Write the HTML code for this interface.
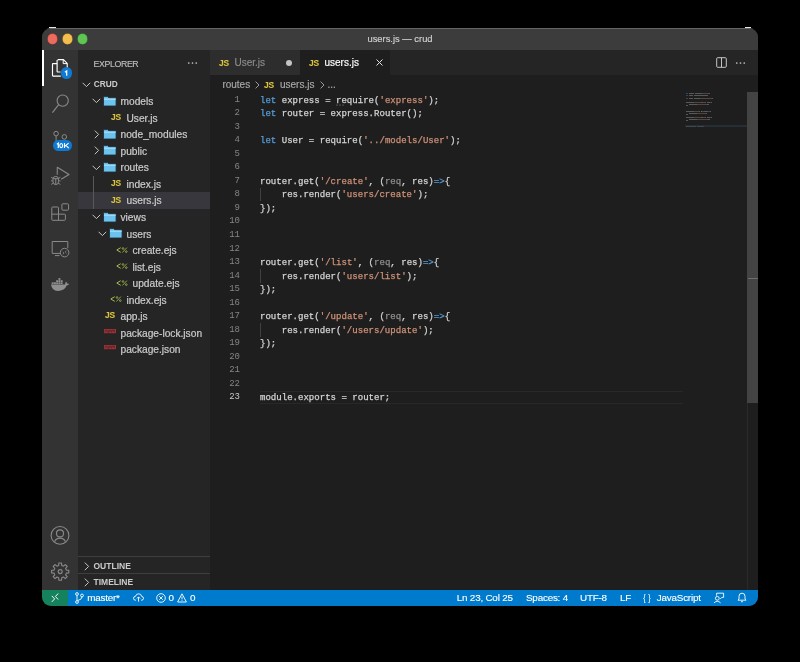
<!DOCTYPE html>
<html><head><meta charset="utf-8">
<style>
*{margin:0;padding:0;box-sizing:border-box}
html,body{width:800px;height:662px;background:#000;overflow:hidden}
body{font-family:"Liberation Sans",sans-serif;position:relative;-webkit-font-smoothing:antialiased}
#root{position:absolute;left:0;top:0;width:800px;height:662px;will-change:transform}
.abs{position:absolute}
svg.abs{overflow:visible}
.t{position:absolute;white-space:pre;color:#cccccc;font-size:10px;line-height:12px}
.side{font-size:10.2px;color:#cccccc;-webkit-text-stroke:0.2px #cccccc}
.jsic{font-size:9.8px;font-weight:700;color:#dcc53c;letter-spacing:-0.3px;-webkit-text-stroke:0.1px #dcc53c;transform:scaleX(0.86);transform-origin:0 0}
.ejsic{font-size:8.6px;font-weight:400;color:#9ab64a;letter-spacing:-0.3px;-webkit-text-stroke:0.05px #9ab64a}
.code{position:absolute;left:260px;-webkit-text-stroke:0.25px currentColor;white-space:pre;font-family:"Liberation Mono",monospace;font-size:9.05px;line-height:13.545px;color:#d4d4d4}
.ln{position:absolute;left:200px;width:40px;font-family:"Liberation Mono",monospace;font-size:9px;line-height:13.545px;color:#858585;text-align:right}
.ln.cur{color:#c6c6c6}
.k{color:#569cd6;-webkit-text-stroke:0.25px #569cd6}.s{color:#ce9178;-webkit-text-stroke:0.25px #ce9178}.dim{color:#8f8f8f;-webkit-text-stroke:0.25px #8f8f8f}
.sb{position:absolute;top:591.6px;white-space:pre;color:#ffffff;font-size:9.9px;letter-spacing:-0.22px;line-height:12px;-webkit-text-stroke:0.12px #fff}
</style></head><body><div id="root">
<!-- window -->
<div class="abs" style="left:42px;top:27.8px;width:716px;height:578.5px;border-radius:9px;background:#1e1e1e;overflow:hidden">
  <div class="abs" style="left:0;top:0;width:716px;height:22.2px;background:#3c3c3c;border-top:1px solid #646464"></div>
</div>
<div class="abs" style="left:49px;top:27px;width:7px;height:1px;background:#e8e8e8"></div>
<div class="abs" style="left:745px;top:27px;width:6px;height:1px;background:#e8e8e8"></div>
<!-- traffic lights -->
<div class="abs" style="left:47.8px;top:34px;width:9.6px;height:9.6px;border-radius:50%;background:#ed6a5e;box-shadow:0 0 0 0.5px #c4463c"></div>
<div class="abs" style="left:62.8px;top:34px;width:9.6px;height:9.6px;border-radius:50%;background:#f4be4f;box-shadow:0 0 0 0.5px #d09a30"></div>
<div class="abs" style="left:77.8px;top:34px;width:9.6px;height:9.6px;border-radius:50%;background:#61c554;box-shadow:0 0 0 0.5px #3fa036"></div>
<div class="t" style="left:300px;width:200px;text-align:center;top:33px;font-size:9.4px;color:#d0d0d0;-webkit-text-stroke:0.15px #d0d0d0">users.js — crud</div>

<!-- activity bar -->
<div class="abs" style="left:42px;top:50px;width:36px;height:540px;background:#333333"></div>
<div class="abs" style="left:42px;top:50px;width:1.6px;height:36px;background:#ffffff"></div>
<!-- explorer icon -->
<svg class="abs" style="left:42px;top:50px" width="36" height="36" viewBox="0 0 36 36">
  <path d="M15.1 13.6 L11 13.6 Q10.5 13.6 10.5 14.1 L10.5 25.6 Q10.5 26.1 11 26.1 L18.8 26.1" fill="none" stroke="#ffffff" stroke-width="1.15"/>
  <path d="M15.6 9.6 L21.4 9.6 L25.2 13.4 L25.2 21.5 M15.1 10.1 L15.1 21.6 Q15.1 22 15.5 22 L18.5 22" fill="none" stroke="#ffffff" stroke-width="1.15"/>
  <path d="M21.2 9.8 L21.2 13.6 L25 13.6" fill="none" stroke="#ffffff" stroke-width="1"/>
</svg>
<div class="abs" style="left:60.5px;top:67.4px;width:11.8px;height:11.8px;border-radius:50%;background:#0e7ad3"></div>
<svg class="abs" style="left:60px;top:67px" width="13" height="13" viewBox="0 0 13 13"><path d="M4.9 5.2 L6.7 4 L6.7 8.7" fill="none" stroke="#fff" stroke-width="1.25"/></svg>
<!-- search -->
<svg class="abs" style="left:42px;top:86px" width="36" height="36" viewBox="0 0 36 36">
  <circle cx="20.7" cy="14.6" r="5.6" fill="none" stroke="#8a8a8a" stroke-width="1.1"/>
  <path d="M16.7 18.6 L10.4 26.6" fill="none" stroke="#8a8a8a" stroke-width="1.1"/>
</svg>
<!-- source control -->
<svg class="abs" style="left:42px;top:122px" width="36" height="36" viewBox="0 0 36 36">
  <circle cx="14.1" cy="11.6" r="2.3" fill="none" stroke="#8a8a8a" stroke-width="1"/>
  <circle cx="22.3" cy="14.9" r="2.3" fill="none" stroke="#8a8a8a" stroke-width="1"/>
  <path d="M14.1 13.9 L14.1 20" fill="none" stroke="#8a8a8a" stroke-width="1"/>
</svg>
<div class="abs" style="left:53.2px;top:139.6px;width:19.2px;height:11.8px;border-radius:5.9px;background:#0e7ad3"></div>
<svg class="abs" style="left:53px;top:139px" width="20" height="13" viewBox="0 0 20 13"><path d="M3.9 5.3 L5.3 4.2 L5.3 9.1" fill="none" stroke="#fff" stroke-width="1.2"/><ellipse cx="8.2" cy="6.6" rx="1.45" ry="2.05" fill="none" stroke="#fff" stroke-width="1.1"/><path d="M11.5 4.1 L11.5 9.1 M15.6 4.1 L11.7 7.4 M12.9 6.3 L15.8 9.1" fill="none" stroke="#fff" stroke-width="1.15"/></svg>
<!-- run & debug -->
<svg class="abs" style="left:42px;top:158px" width="36" height="36" viewBox="0 0 36 36">
  <path d="M15.25 16.7 L15.25 9.3 L27 16.5 L19.2 21.3" fill="none" stroke="#8a8a8a" stroke-width="1.05" stroke-linejoin="round"/>
  <path d="M11 21.2 Q11 18.4 13.75 18.4 Q16.5 18.4 16.5 21.2 L16.5 23.6 Q16.5 26.6 13.75 26.6 Q11 26.6 11 23.6 Z M11.2 20.7 L16.3 20.7 M13.75 20.7 L13.75 26.4" fill="none" stroke="#8a8a8a" stroke-width="1"/>
  <path d="M9.1 19.3 L11.2 20.5 M18.4 19.3 L16.3 20.5 M9 22.9 L11 22.9 M18.5 22.9 L16.5 22.9 M9.2 26.4 L11.3 25.2 M18.3 26.4 L16.2 25.2" fill="none" stroke="#8a8a8a" stroke-width="0.95"/>
</svg>
<!-- extensions -->
<svg class="abs" style="left:42px;top:194px" width="36" height="36" viewBox="0 0 36 36">
  <path d="M9.8 13.8 Q9.8 13 10.6 13 L15.8 13 Q16.5 13 16.5 13.8 L16.5 20.15 L22.6 20.15 Q23.4 20.15 23.4 20.9 L23.4 25.5 Q23.4 26.3 22.6 26.3 L10.6 26.3 Q9.8 26.3 9.8 25.5 Z M9.8 20.15 L16.5 20.15 L16.5 26.3" fill="none" stroke="#8a8a8a" stroke-width="1"/>
  <rect x="19.9" y="9.8" width="6.65" height="6.4" rx="1" fill="none" stroke="#8a8a8a" stroke-width="1"/>
</svg>
<!-- remote explorer -->
<svg class="abs" style="left:42px;top:230px" width="36" height="36" viewBox="0 0 36 36">
  <path d="M18.5 23.4 L10.2 23.4 L10.2 11.5 L25.8 11.5 L25.8 18.2 M13 25.6 L17.5 25.6" fill="none" stroke="#8a8a8a" stroke-width="1"/>
  <circle cx="22.6" cy="22.6" r="4.3" fill="none" stroke="#8a8a8a" stroke-width="1"/>
  <path d="M20.7 21.9 L22 23 L20.9 24.4 M24.4 20.8 L23.2 22 L24.4 23.2" fill="none" stroke="#8a8a8a" stroke-width="0.8"/>
</svg>
<!-- docker -->
<svg class="abs" style="left:42px;top:266px" width="36" height="36" viewBox="0 0 36 36">
  <g fill="#8f8f8f">
  <path d="M9 18.4 L23 18.4 Q23.2 16.8 24.1 15.6 Q25 16.6 25 17.6 Q26.2 17.3 27.2 18 Q26.4 19.4 24.7 19.5 Q22.6 24.9 15.8 24.9 Q10 24.9 9 18.4 Z"/>
  <rect x="9.70" y="16.3" width="1.95" height="1.8"/><rect x="11.95" y="16.3" width="1.95" height="1.8"/><rect x="14.20" y="16.3" width="1.95" height="1.8"/><rect x="16.45" y="16.3" width="1.95" height="1.8"/><rect x="18.70" y="16.3" width="1.95" height="1.8"/><rect x="14.20" y="14.2" width="1.95" height="1.8"/><rect x="16.45" y="14.2" width="1.95" height="1.8"/><rect x="18.70" y="14.2" width="1.95" height="1.8"/><rect x="16.45" y="12.1" width="1.95" height="1.8"/>
  </g>
</svg>
<!-- account -->
<svg class="abs" style="left:42px;top:517px" width="36" height="36" viewBox="0 0 36 36">
  <circle cx="18" cy="18.4" r="8.9" fill="none" stroke="#8a8a8a" stroke-width="1.1"/>
  <circle cx="18" cy="16.4" r="3.5" fill="none" stroke="#8a8a8a" stroke-width="1.1"/>
  <path d="M12.6 24.5 Q14.2 21.1 18 21.1 Q21.8 21.1 23.4 24.5" fill="none" stroke="#8a8a8a" stroke-width="1.1"/>
</svg>
<!-- settings gear -->
<svg class="abs" style="left:42px;top:553px" width="36" height="36" viewBox="0 0 36 36">
  <path d="M16.68 12.49 L16.84 10.01 L19.56 10.01 L19.72 12.49 L21.44 13.20 L23.31 11.56 L25.24 13.49 L23.60 15.36 L24.31 17.08 L26.79 17.24 L26.79 19.96 L24.31 20.12 L23.60 21.84 L25.24 23.71 L23.31 25.64 L21.44 24.00 L19.72 24.71 L19.56 27.19 L16.84 27.19 L16.68 24.71 L14.96 24.00 L13.09 25.64 L11.16 23.71 L12.80 21.84 L12.09 20.12 L9.61 19.96 L9.61 17.24 L12.09 17.08 L12.80 15.36 L11.16 13.49 L13.09 11.56 L14.96 13.20 Z" fill="none" stroke="#8a8a8a" stroke-width="1.1" stroke-linejoin="round"/>
  <circle cx="18.2" cy="18.6" r="2" fill="none" stroke="#8a8a8a" stroke-width="1.1"/>
</svg>

<!-- sidebar -->
<div class="abs" style="left:78px;top:50px;width:132px;height:540px;background:#252526"></div>
<div class="t" style="left:93.6px;top:57.6px;font-size:8.8px;letter-spacing:-0.4px;color:#bbbbbb;-webkit-text-stroke:0.15px #bbbbbb">EXPLORER</div>
<svg class="abs" style="left:186px;top:61px" width="13" height="4" viewBox="0 0 13 4"><circle cx="2.75" cy="2" r="0.85" fill="#c5c5c5"/><circle cx="6.5" cy="2" r="0.85" fill="#c5c5c5"/><circle cx="10.25" cy="2" r="0.85" fill="#c5c5c5"/></svg>
<svg class="abs" style="left:81.5px;top:82px" width="9" height="6" viewBox="0 0 9 6"><path d="M0.6 0.8 L4.4 4.6 L8.2 0.8" fill="none" stroke="#c5c5c5" stroke-width="1"/></svg>
<div class="t" style="left:93.8px;top:77.9px;font-size:8.3px;font-weight:700;color:#cccccc">CRUD</div>
<svg class="abs" style="left:91.5px;top:98.465px" width="9" height="6" viewBox="0 0 9 6"><path d="M0.6 0.8 L4.4 4.6 L8.2 0.8" fill="none" stroke="#c5c5c5" stroke-width="1"/></svg>
<svg class="abs" style="left:102.9px;top:95.865px" width="13.6" height="10.6" viewBox="0 0 13 10"><path d="M0.5 1.2 Q0.5 0.5 1.2 0.5 L4.3 0.5 L5.5 1.6 L11.8 1.6 Q12.5 1.6 12.5 2.3 L12.5 8.8 Q12.5 9.5 11.8 9.5 L1.2 9.5 Q0.5 9.5 0.5 8.8 Z" fill="#6cc3ee" stroke="#1c2c38" stroke-width="0.8"/><path d="M0.9 3 L12.1 3" stroke="#a6dcf6" stroke-width="1.2"/></svg>
<div class="t side" style="left:120.50px;top:96.27px">models</div>
<div class="t jsic" style="left:111.30px;top:110.89px">JS</div>
<div class="t side" style="left:126.50px;top:112.80px">User.js</div>
<svg class="abs" style="left:93.5px;top:129.825px" width="6" height="9" viewBox="0 0 6 9"><path d="M0.8 0.6 L4.6 4.4 L0.8 8.2" fill="none" stroke="#c5c5c5" stroke-width="1"/></svg>
<svg class="abs" style="left:102.9px;top:128.92499999999998px" width="13.6" height="10.6" viewBox="0 0 13 10"><path d="M0.5 1.2 Q0.5 0.5 1.2 0.5 L4.3 0.5 L5.5 1.6 L11.8 1.6 Q12.5 1.6 12.5 2.3 L12.5 8.8 Q12.5 9.5 11.8 9.5 L1.2 9.5 Q0.5 9.5 0.5 8.8 Z" fill="#6cc3ee" stroke="#1c2c38" stroke-width="0.8"/><path d="M0.9 3 L12.1 3" stroke="#a6dcf6" stroke-width="1.2"/></svg>
<div class="t side" style="left:120.50px;top:129.32px">node_modules</div>
<svg class="abs" style="left:93.5px;top:146.35500000000002px" width="6" height="9" viewBox="0 0 6 9"><path d="M0.8 0.6 L4.6 4.4 L0.8 8.2" fill="none" stroke="#c5c5c5" stroke-width="1"/></svg>
<svg class="abs" style="left:102.9px;top:145.455px" width="13.6" height="10.6" viewBox="0 0 13 10"><path d="M0.5 1.2 Q0.5 0.5 1.2 0.5 L4.3 0.5 L5.5 1.6 L11.8 1.6 Q12.5 1.6 12.5 2.3 L12.5 8.8 Q12.5 9.5 11.8 9.5 L1.2 9.5 Q0.5 9.5 0.5 8.8 Z" fill="#6cc3ee" stroke="#1c2c38" stroke-width="0.8"/><path d="M0.9 3 L12.1 3" stroke="#a6dcf6" stroke-width="1.2"/></svg>
<div class="t side" style="left:120.50px;top:145.86px">public</div>
<svg class="abs" style="left:91.5px;top:164.58499999999998px" width="9" height="6" viewBox="0 0 9 6"><path d="M0.6 0.8 L4.4 4.6 L8.2 0.8" fill="none" stroke="#c5c5c5" stroke-width="1"/></svg>
<svg class="abs" style="left:102.9px;top:161.98499999999999px" width="13.6" height="10.6" viewBox="0 0 13 10"><path d="M0.5 1.2 Q0.5 0.5 1.2 0.5 L4.3 0.5 L5.5 1.6 L11.8 1.6 Q12.5 1.6 12.5 2.3 L12.5 8.8 Q12.5 9.5 11.8 9.5 L1.2 9.5 Q0.5 9.5 0.5 8.8 Z" fill="#6cc3ee" stroke="#1c2c38" stroke-width="0.8"/><path d="M0.9 3 L12.1 3" stroke="#a6dcf6" stroke-width="1.2"/></svg>
<div class="t side" style="left:120.50px;top:162.38px">routes</div>
<div class="t jsic" style="left:111.30px;top:177.02px">JS</div>
<div class="t side" style="left:126.50px;top:178.92px">index.js</div>
<div class="abs" style="left:78px;top:192.18px;width:132px;height:16.53px;background:#37373d"></div>
<div class="t jsic" style="left:111.30px;top:193.54px">JS</div>
<div class="t side" style="left:126.50px;top:195.44px">users.js</div>
<svg class="abs" style="left:91.5px;top:214.175px" width="9" height="6" viewBox="0 0 9 6"><path d="M0.6 0.8 L4.4 4.6 L8.2 0.8" fill="none" stroke="#c5c5c5" stroke-width="1"/></svg>
<svg class="abs" style="left:102.9px;top:211.57500000000002px" width="13.6" height="10.6" viewBox="0 0 13 10"><path d="M0.5 1.2 Q0.5 0.5 1.2 0.5 L4.3 0.5 L5.5 1.6 L11.8 1.6 Q12.5 1.6 12.5 2.3 L12.5 8.8 Q12.5 9.5 11.8 9.5 L1.2 9.5 Q0.5 9.5 0.5 8.8 Z" fill="#6cc3ee" stroke="#1c2c38" stroke-width="0.8"/><path d="M0.9 3 L12.1 3" stroke="#a6dcf6" stroke-width="1.2"/></svg>
<div class="t side" style="left:120.50px;top:211.98px">views</div>
<svg class="abs" style="left:97.5px;top:230.70499999999998px" width="9" height="6" viewBox="0 0 9 6"><path d="M0.6 0.8 L4.4 4.6 L8.2 0.8" fill="none" stroke="#c5c5c5" stroke-width="1"/></svg>
<svg class="abs" style="left:108.9px;top:228.105px" width="13.6" height="10.6" viewBox="0 0 13 10"><path d="M0.5 1.2 Q0.5 0.5 1.2 0.5 L4.3 0.5 L5.5 1.6 L11.8 1.6 Q12.5 1.6 12.5 2.3 L12.5 8.8 Q12.5 9.5 11.8 9.5 L1.2 9.5 Q0.5 9.5 0.5 8.8 Z" fill="#6cc3ee" stroke="#1c2c38" stroke-width="0.8"/><path d="M0.9 3 L12.1 3" stroke="#a6dcf6" stroke-width="1.2"/></svg>
<div class="t side" style="left:126.50px;top:228.50px">users</div>
<svg class="abs" style="left:115.70px;top:246.84px" width="12" height="7" viewBox="0 0 12 7"><path d="M4.7 0.7 L0.8 3 L4.7 5.3" fill="none" stroke="#a3bf4e" stroke-width="1"/><circle cx="7" cy="1.5" r="0.85" fill="none" stroke="#a3bf4e" stroke-width="0.75"/><circle cx="10.3" cy="4.6" r="0.85" fill="none" stroke="#a3bf4e" stroke-width="0.75"/><path d="M10.9 0.6 L6.4 5.5" stroke="#a3bf4e" stroke-width="0.8"/></svg>
<div class="t side" style="left:132.50px;top:245.04px">create.ejs</div>
<svg class="abs" style="left:115.70px;top:263.37px" width="12" height="7" viewBox="0 0 12 7"><path d="M4.7 0.7 L0.8 3 L4.7 5.3" fill="none" stroke="#a3bf4e" stroke-width="1"/><circle cx="7" cy="1.5" r="0.85" fill="none" stroke="#a3bf4e" stroke-width="0.75"/><circle cx="10.3" cy="4.6" r="0.85" fill="none" stroke="#a3bf4e" stroke-width="0.75"/><path d="M10.9 0.6 L6.4 5.5" stroke="#a3bf4e" stroke-width="0.8"/></svg>
<div class="t side" style="left:132.50px;top:261.56px">list.ejs</div>
<svg class="abs" style="left:115.70px;top:279.90px" width="12" height="7" viewBox="0 0 12 7"><path d="M4.7 0.7 L0.8 3 L4.7 5.3" fill="none" stroke="#a3bf4e" stroke-width="1"/><circle cx="7" cy="1.5" r="0.85" fill="none" stroke="#a3bf4e" stroke-width="0.75"/><circle cx="10.3" cy="4.6" r="0.85" fill="none" stroke="#a3bf4e" stroke-width="0.75"/><path d="M10.9 0.6 L6.4 5.5" stroke="#a3bf4e" stroke-width="0.8"/></svg>
<div class="t side" style="left:132.50px;top:278.10px">update.ejs</div>
<svg class="abs" style="left:109.70px;top:296.43px" width="12" height="7" viewBox="0 0 12 7"><path d="M4.7 0.7 L0.8 3 L4.7 5.3" fill="none" stroke="#a3bf4e" stroke-width="1"/><circle cx="7" cy="1.5" r="0.85" fill="none" stroke="#a3bf4e" stroke-width="0.75"/><circle cx="10.3" cy="4.6" r="0.85" fill="none" stroke="#a3bf4e" stroke-width="0.75"/><path d="M10.9 0.6 L6.4 5.5" stroke="#a3bf4e" stroke-width="0.8"/></svg>
<div class="t side" style="left:126.50px;top:294.62px">index.ejs</div>
<div class="t jsic" style="left:105.30px;top:309.25px">JS</div>
<div class="t side" style="left:120.50px;top:311.15px">app.js</div>
<svg class="abs" style="left:103.90px;top:328.88px" width="12" height="5" viewBox="0 0 12 5"><rect x="0" y="0" width="12" height="4.2" fill="#9e3538"/><path d="M1.2 3.4 L1.2 1.1 L3 1.1 L3 3.4 M4.4 4.4 L4.4 1.1 L6.4 1.1 L6.4 2.7 L5.2 2.7 M7.6 3.4 L7.6 1.1 L10.6 1.1 L10.6 3.4 M9.1 1.1 L9.1 3" fill="none" stroke="#5a1e22" stroke-width="0.7"/></svg>
<div class="t side" style="left:120.50px;top:327.69px">package-lock.json</div>
<svg class="abs" style="left:103.90px;top:345.42px" width="12" height="5" viewBox="0 0 12 5"><rect x="0" y="0" width="12" height="4.2" fill="#9e3538"/><path d="M1.2 3.4 L1.2 1.1 L3 1.1 L3 3.4 M4.4 4.4 L4.4 1.1 L6.4 1.1 L6.4 2.7 L5.2 2.7 M7.6 3.4 L7.6 1.1 L10.6 1.1 L10.6 3.4 M9.1 1.1 L9.1 3" fill="none" stroke="#5a1e22" stroke-width="0.7"/></svg>
<div class="t side" style="left:120.50px;top:344.22px">package.json</div>
<div class="abs" style="left:93px;top:175.65px;width:1px;height:33.06px;background:#585858"></div>
<!-- outline / timeline -->
<div class="abs" style="left:78px;top:556.3px;width:132px;height:1px;background:#3e3e3e"></div>
<div class="abs" style="left:78px;top:573.2px;width:132px;height:1px;background:#3e3e3e"></div>
<svg class="abs" style="left:84px;top:561.5px" width="6" height="9" viewBox="0 0 6 9"><path d="M0.8 0.6 L4.6 4.4 L0.8 8.2" fill="none" stroke="#c5c5c5" stroke-width="1"/></svg>
<div class="t" style="left:93.5px;top:559.6px;font-size:8.5px;font-weight:700;color:#cccccc">OUTLINE</div>
<svg class="abs" style="left:84px;top:578px" width="6" height="9" viewBox="0 0 6 9"><path d="M0.8 0.6 L4.6 4.4 L0.8 8.2" fill="none" stroke="#c5c5c5" stroke-width="1"/></svg>
<div class="t" style="left:93.5px;top:576px;font-size:8.5px;font-weight:700;color:#cccccc">TIMELINE</div>

<!-- tabs -->
<div class="abs" style="left:210px;top:50px;width:548px;height:25px;background:#252526"></div>
<div class="abs" style="left:210px;top:50px;width:90px;height:25px;background:#2d2d2d"></div>
<div class="abs" style="left:300px;top:50px;width:90px;height:25px;background:#1e1e1e"></div>
<div class="t jsic" style="left:218.6px;top:57px">JS</div>
<div class="t" style="left:234.5px;top:57.3px;color:#8c8c8c;-webkit-text-stroke:0.15px #8c8c8c">User.js</div>
<div class="abs" style="left:286.3px;top:59.7px;width:6px;height:6px;border-radius:50%;background:#c4c4c4"></div>
<div class="t jsic" style="left:309.4px;top:57px">JS</div>
<div class="t" style="left:324.5px;top:57.3px;color:#ffffff;-webkit-text-stroke:0.15px #fff">users.js</div>
<svg class="abs" style="left:376px;top:59px" width="7" height="7" viewBox="0 0 7 7"><path d="M0.5 0.5 L6.5 6.5 M6.5 0.5 L0.5 6.5" stroke="#e0e0e0" stroke-width="1"/></svg>
<!-- split / more -->
<svg class="abs" style="left:715.8px;top:57.4px" width="11" height="11" viewBox="0 0 11 11"><rect x="0.7" y="0.7" width="9.6" height="9.6" rx="1" fill="none" stroke="#c5c5c5" stroke-width="1"/><path d="M5.5 0.7 L5.5 10.3" stroke="#c5c5c5" stroke-width="1"/></svg>
<svg class="abs" style="left:734px;top:61px" width="13" height="4" viewBox="0 0 13 4"><circle cx="2.75" cy="2" r="0.85" fill="#c5c5c5"/><circle cx="6.5" cy="2" r="0.85" fill="#c5c5c5"/><circle cx="10.25" cy="2" r="0.85" fill="#c5c5c5"/></svg>

<!-- breadcrumbs -->
<div class="t" style="left:222.4px;top:79.4px;color:#a9a9a9;-webkit-text-stroke:0.15px #a9a9a9">routes</div>
<svg class="abs" style="left:254.6px;top:80.5px" width="5" height="8" viewBox="0 0 5 8"><path d="M0.6 0.6 L4 4 L0.6 7.4" fill="none" stroke="#a9a9a9" stroke-width="0.9"/></svg>
<div class="t jsic" style="left:264.2px;top:79.4px">JS</div>
<div class="t" style="left:280px;top:79.4px;color:#a9a9a9;-webkit-text-stroke:0.15px #a9a9a9">users.js</div>
<svg class="abs" style="left:319.6px;top:80.5px" width="5" height="8" viewBox="0 0 5 8"><path d="M0.6 0.6 L4 4 L0.6 7.4" fill="none" stroke="#a9a9a9" stroke-width="0.9"/></svg>
<div class="t" style="left:327.5px;top:79.4px;color:#a9a9a9;-webkit-text-stroke:0.15px #a9a9a9">...</div>

<!-- code -->
<div class="ln" style="top:93.50px">1</div>
<div class="code" style="top:93.50px"><span class="k">let</span> express = require(<span class="s">&#x27;express&#x27;</span>);</div>
<div class="ln" style="top:107.05px">2</div>
<div class="code" style="top:107.05px"><span class="k">let</span> router = express.Router();</div>
<div class="ln" style="top:120.59px">3</div>
<div class="ln" style="top:134.13px">4</div>
<div class="code" style="top:134.13px"><span class="k">let</span> User = require(<span class="s">&#x27;../models/User&#x27;</span>);</div>
<div class="ln" style="top:147.68px">5</div>
<div class="ln" style="top:161.22px">6</div>
<div class="ln" style="top:174.77px">7</div>
<div class="code" style="top:174.77px">router.get(<span class="s">&#x27;/create&#x27;</span>, (<span class="dim">req</span>, res)<span class="k">=&gt;</span>{</div>
<div class="ln" style="top:188.31px">8</div>
<div class="code" style="top:188.31px">    res.render(<span class="s">&#x27;users/create&#x27;</span>);</div>
<div class="ln" style="top:201.86px">9</div>
<div class="code" style="top:201.86px">});</div>
<div class="ln" style="top:215.41px">10</div>
<div class="ln" style="top:228.95px">11</div>
<div class="ln" style="top:242.50px">12</div>
<div class="ln" style="top:256.04px">13</div>
<div class="code" style="top:256.04px">router.get(<span class="s">&#x27;/list&#x27;</span>, (<span class="dim">req</span>, res)<span class="k">=&gt;</span>{</div>
<div class="ln" style="top:269.59px">14</div>
<div class="code" style="top:269.59px">    res.render(<span class="s">&#x27;users/list&#x27;</span>);</div>
<div class="ln" style="top:283.13px">15</div>
<div class="code" style="top:283.13px">});</div>
<div class="ln" style="top:296.68px">16</div>
<div class="ln" style="top:310.22px">17</div>
<div class="code" style="top:310.22px">router.get(<span class="s">&#x27;/update&#x27;</span>, (<span class="dim">req</span>, res)<span class="k">=&gt;</span>{</div>
<div class="ln" style="top:323.76px">18</div>
<div class="code" style="top:323.76px">    res.render(<span class="s">&#x27;/users/update&#x27;</span>);</div>
<div class="ln" style="top:337.31px">19</div>
<div class="code" style="top:337.31px">});</div>
<div class="ln" style="top:350.86px">20</div>
<div class="ln" style="top:364.40px">21</div>
<div class="ln" style="top:377.94px">22</div>
<div class="ln cur" style="top:391.49px">23</div>
<div class="code" style="top:391.49px">module.exports = router;</div>
<div class="abs" style="left:260px;top:187.81px;width:1px;height:13.54px;background:#404040"></div>
<div class="abs" style="left:260px;top:269.09px;width:1px;height:13.54px;background:#404040"></div>
<div class="abs" style="left:260px;top:323.26px;width:1px;height:13.54px;background:#404040"></div>
<div class="abs" style="left:259.5px;top:390.75px;width:423px;height:13px;border-top:1px solid #282828;border-bottom:1px solid #282828"></div>
<svg class="abs" style="left:335.5px;top:104px" width="9" height="2"><circle cx="1" cy="1" r="0.55" fill="#9a9a9a"/><circle cx="4" cy="1" r="0.55" fill="#9a9a9a"/><circle cx="7" cy="1" r="0.55" fill="#9a9a9a"/></svg>
<div class="abs" style="left:685.50px;top:93.00px;width:2.25px;height:1.1px;background:#569cd6;opacity:0.32"></div>
<div class="abs" style="left:688.50px;top:93.00px;width:5.25px;height:1.1px;background:#d4d4d4;opacity:0.32"></div>
<div class="abs" style="left:694.50px;top:93.00px;width:0.75px;height:1.1px;background:#d4d4d4;opacity:0.32"></div>
<div class="abs" style="left:696.00px;top:93.00px;width:6.00px;height:1.1px;background:#d4d4d4;opacity:0.32"></div>
<div class="abs" style="left:702.00px;top:93.00px;width:6.75px;height:1.1px;background:#ce9178;opacity:0.32"></div>
<div class="abs" style="left:708.75px;top:93.00px;width:1.50px;height:1.1px;background:#d4d4d4;opacity:0.32"></div>
<div class="abs" style="left:685.50px;top:94.50px;width:2.25px;height:1.1px;background:#569cd6;opacity:0.32"></div>
<div class="abs" style="left:688.50px;top:94.50px;width:4.50px;height:1.1px;background:#d4d4d4;opacity:0.32"></div>
<div class="abs" style="left:693.75px;top:94.50px;width:0.75px;height:1.1px;background:#d4d4d4;opacity:0.32"></div>
<div class="abs" style="left:695.25px;top:94.50px;width:12.75px;height:1.1px;background:#d4d4d4;opacity:0.32"></div>
<div class="abs" style="left:685.50px;top:97.50px;width:2.25px;height:1.1px;background:#569cd6;opacity:0.32"></div>
<div class="abs" style="left:688.50px;top:97.50px;width:3.00px;height:1.1px;background:#d4d4d4;opacity:0.32"></div>
<div class="abs" style="left:692.25px;top:97.50px;width:0.75px;height:1.1px;background:#d4d4d4;opacity:0.32"></div>
<div class="abs" style="left:693.75px;top:97.50px;width:6.00px;height:1.1px;background:#d4d4d4;opacity:0.32"></div>
<div class="abs" style="left:699.75px;top:97.50px;width:12.00px;height:1.1px;background:#ce9178;opacity:0.32"></div>
<div class="abs" style="left:711.75px;top:97.50px;width:1.50px;height:1.1px;background:#d4d4d4;opacity:0.32"></div>
<div class="abs" style="left:685.50px;top:102.00px;width:8.25px;height:1.1px;background:#d4d4d4;opacity:0.32"></div>
<div class="abs" style="left:693.75px;top:102.00px;width:6.75px;height:1.1px;background:#ce9178;opacity:0.32"></div>
<div class="abs" style="left:700.50px;top:102.00px;width:0.75px;height:1.1px;background:#d4d4d4;opacity:0.32"></div>
<div class="abs" style="left:702.00px;top:102.00px;width:0.75px;height:1.1px;background:#d4d4d4;opacity:0.32"></div>
<div class="abs" style="left:702.75px;top:102.00px;width:2.25px;height:1.1px;background:#9a9a9a;opacity:0.32"></div>
<div class="abs" style="left:705.00px;top:102.00px;width:0.75px;height:1.1px;background:#d4d4d4;opacity:0.32"></div>
<div class="abs" style="left:706.50px;top:102.00px;width:3.00px;height:1.1px;background:#d4d4d4;opacity:0.32"></div>
<div class="abs" style="left:709.50px;top:102.00px;width:1.50px;height:1.1px;background:#569cd6;opacity:0.32"></div>
<div class="abs" style="left:711.00px;top:102.00px;width:0.75px;height:1.1px;background:#d4d4d4;opacity:0.32"></div>
<div class="abs" style="left:688.50px;top:103.50px;width:8.25px;height:1.1px;background:#d4d4d4;opacity:0.32"></div>
<div class="abs" style="left:696.75px;top:103.50px;width:10.50px;height:1.1px;background:#ce9178;opacity:0.32"></div>
<div class="abs" style="left:707.25px;top:103.50px;width:1.50px;height:1.1px;background:#d4d4d4;opacity:0.32"></div>
<div class="abs" style="left:685.50px;top:105.00px;width:2.25px;height:1.1px;background:#d4d4d4;opacity:0.32"></div>
<div class="abs" style="left:685.50px;top:111.00px;width:8.25px;height:1.1px;background:#d4d4d4;opacity:0.32"></div>
<div class="abs" style="left:693.75px;top:111.00px;width:5.25px;height:1.1px;background:#ce9178;opacity:0.32"></div>
<div class="abs" style="left:699.00px;top:111.00px;width:0.75px;height:1.1px;background:#d4d4d4;opacity:0.32"></div>
<div class="abs" style="left:700.50px;top:111.00px;width:0.75px;height:1.1px;background:#d4d4d4;opacity:0.32"></div>
<div class="abs" style="left:701.25px;top:111.00px;width:2.25px;height:1.1px;background:#9a9a9a;opacity:0.32"></div>
<div class="abs" style="left:703.50px;top:111.00px;width:0.75px;height:1.1px;background:#d4d4d4;opacity:0.32"></div>
<div class="abs" style="left:705.00px;top:111.00px;width:3.00px;height:1.1px;background:#d4d4d4;opacity:0.32"></div>
<div class="abs" style="left:708.00px;top:111.00px;width:1.50px;height:1.1px;background:#569cd6;opacity:0.32"></div>
<div class="abs" style="left:709.50px;top:111.00px;width:0.75px;height:1.1px;background:#d4d4d4;opacity:0.32"></div>
<div class="abs" style="left:688.50px;top:112.50px;width:8.25px;height:1.1px;background:#d4d4d4;opacity:0.32"></div>
<div class="abs" style="left:696.75px;top:112.50px;width:9.00px;height:1.1px;background:#ce9178;opacity:0.32"></div>
<div class="abs" style="left:705.75px;top:112.50px;width:1.50px;height:1.1px;background:#d4d4d4;opacity:0.32"></div>
<div class="abs" style="left:685.50px;top:114.00px;width:2.25px;height:1.1px;background:#d4d4d4;opacity:0.32"></div>
<div class="abs" style="left:685.50px;top:117.00px;width:8.25px;height:1.1px;background:#d4d4d4;opacity:0.32"></div>
<div class="abs" style="left:693.75px;top:117.00px;width:6.75px;height:1.1px;background:#ce9178;opacity:0.32"></div>
<div class="abs" style="left:700.50px;top:117.00px;width:0.75px;height:1.1px;background:#d4d4d4;opacity:0.32"></div>
<div class="abs" style="left:702.00px;top:117.00px;width:0.75px;height:1.1px;background:#d4d4d4;opacity:0.32"></div>
<div class="abs" style="left:702.75px;top:117.00px;width:2.25px;height:1.1px;background:#9a9a9a;opacity:0.32"></div>
<div class="abs" style="left:705.00px;top:117.00px;width:0.75px;height:1.1px;background:#d4d4d4;opacity:0.32"></div>
<div class="abs" style="left:706.50px;top:117.00px;width:3.00px;height:1.1px;background:#d4d4d4;opacity:0.32"></div>
<div class="abs" style="left:709.50px;top:117.00px;width:1.50px;height:1.1px;background:#569cd6;opacity:0.32"></div>
<div class="abs" style="left:711.00px;top:117.00px;width:0.75px;height:1.1px;background:#d4d4d4;opacity:0.32"></div>
<div class="abs" style="left:688.50px;top:118.50px;width:8.25px;height:1.1px;background:#d4d4d4;opacity:0.32"></div>
<div class="abs" style="left:696.75px;top:118.50px;width:11.25px;height:1.1px;background:#ce9178;opacity:0.32"></div>
<div class="abs" style="left:708.00px;top:118.50px;width:1.50px;height:1.1px;background:#d4d4d4;opacity:0.32"></div>
<div class="abs" style="left:685.50px;top:120.00px;width:2.25px;height:1.1px;background:#d4d4d4;opacity:0.32"></div>
<div class="abs" style="left:685.50px;top:126.00px;width:10.50px;height:1.1px;background:#d4d4d4;opacity:0.32"></div>
<div class="abs" style="left:696.75px;top:126.00px;width:0.75px;height:1.1px;background:#d4d4d4;opacity:0.32"></div>
<div class="abs" style="left:698.25px;top:126.00px;width:5.25px;height:1.1px;background:#d4d4d4;opacity:0.32"></div>
<div class="abs" style="left:685px;top:125px;width:62px;height:2.4px;background:#2b3a4b;opacity:0.55"></div>

<!-- minimap -->
<div class="abs" style="left:685px;top:92px;width:62px;height:498px"></div>
<!-- scrollbar -->
<div class="abs" style="left:747.3px;top:92px;width:10.7px;height:311px;background:#434343"></div>
<div class="abs" style="left:747.3px;top:403px;width:1px;height:187px;background:#2a2a2a"></div>
<div class="abs" style="left:747.6px;top:278.2px;width:10.4px;height:1.2px;background:#6e6e6e"></div>

<!-- status bar -->
<div class="abs" style="left:67.9px;top:590px;width:690.1px;height:16.3px;background:#007acc;border-radius:0 0 9px 0"></div>
<div class="abs" style="left:42px;top:590px;width:26px;height:16.3px;background:#16825d;border-radius:0 0 0 9px"></div>
<svg class="abs" style="left:51px;top:593px" width="8" height="10" viewBox="0 0 8 10"><path d="M0.8 2.9 L3.6 5.9 L0.8 8.9 M7.2 0.5 L4.4 3.5 L7.2 6.5" fill="none" stroke="#fff" stroke-width="0.95"/></svg>
<svg class="abs" style="left:74.5px;top:591.5px" width="9" height="12" viewBox="0 0 9 12"><circle cx="2" cy="2" r="1.4" fill="none" stroke="#fff" stroke-width="0.9"/><circle cx="2" cy="10" r="1.4" fill="none" stroke="#fff" stroke-width="0.9"/><circle cx="7" cy="3.5" r="1.4" fill="none" stroke="#fff" stroke-width="0.9"/><path d="M2 3.4 L2 8.6 M7 4.9 Q7 7.5 2.6 8.6" fill="none" stroke="#fff" stroke-width="0.9"/></svg>
<div class="sb" style="left:87.2px">master*</div>
<svg class="abs" style="left:133px;top:592.5px" width="11" height="9" viewBox="0 0 11 9"><path d="M3 7.2 L2.4 7.2 Q0.5 7.2 0.5 5.2 Q0.5 3.4 2.5 3.3 Q3 0.8 5.6 0.8 Q8.3 0.8 8.6 3.4 Q10.5 3.5 10.5 5.3 Q10.5 7.2 8.5 7.2 L8 7.2 M5.5 8.6 L5.5 4 M3.9 5.5 L5.5 3.9 L7.1 5.5" fill="none" stroke="#fff" stroke-width="0.9"/></svg>
<svg class="abs" style="left:155.5px;top:593px" width="10" height="10" viewBox="0 0 10 10"><circle cx="5" cy="5" r="4.3" fill="none" stroke="#fff" stroke-width="0.9"/><path d="M3.2 3.2 L6.8 6.8 M6.8 3.2 L3.2 6.8" stroke="#fff" stroke-width="0.9"/></svg>
<div class="sb" style="left:168.4px">0</div>
<svg class="abs" style="left:177px;top:592.6px" width="10" height="10" viewBox="0 0 10 10"><path d="M5 0.8 L9.4 9 L0.6 9 Z M5 3.6 L5 6.4 M5 7.3 L5 8" fill="none" stroke="#fff" stroke-width="0.9"/></svg>
<div class="sb" style="left:190px">0</div>
<div class="sb" style="left:456.8px">Ln 23, Col 25</div>
<div class="sb" style="left:526px">Spaces: 4</div>
<div class="sb" style="left:580px">UTF-8</div>
<div class="sb" style="left:620px">LF</div>
<div class="sb" style="left:643px;font-size:8.4px;letter-spacing:0;top:592.4px;-webkit-text-stroke:0">{ }</div>
<div class="sb" style="left:656.8px">JavaScript</div>
<svg class="abs" style="left:713px;top:592px" width="12" height="12" viewBox="0 0 12 12"><circle cx="4.3" cy="6.3" r="1.9" fill="none" stroke="#fff" stroke-width="0.9"/><path d="M1 10.9 Q4.3 7.6 7.6 10.9 M3.6 3.6 L3.6 1.2 L10.6 1.2 L10.6 5.4 L8.8 5.4 L7.2 7" fill="none" stroke="#fff" stroke-width="0.9"/></svg>
<svg class="abs" style="left:736.5px;top:592px" width="10" height="11" viewBox="0 0 10 11"><path d="M1 8.2 L9 8.2 L8 7 L8 4.2 Q8 1.2 5 1.2 Q2 1.2 2 4.2 L2 7 Z M4 9.4 Q5 10.6 6 9.4" fill="none" stroke="#fff" stroke-width="0.9"/></svg>
</div></body></html>
